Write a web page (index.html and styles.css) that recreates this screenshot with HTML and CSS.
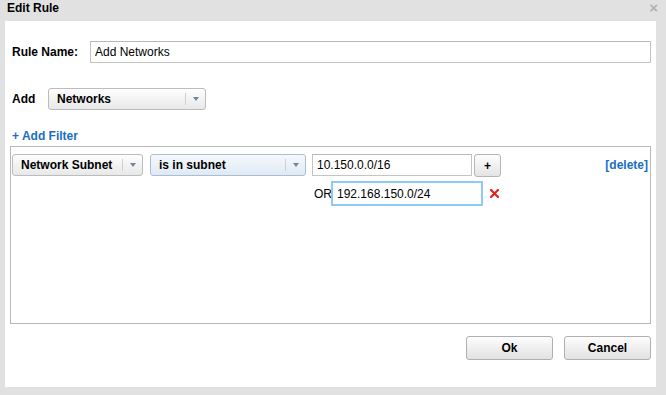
FILE: index.html
```html
<!DOCTYPE html>
<html lang="en">
<head>
    <meta charset="UTF-8">
    <meta name="viewport" content="width=device-width, initial-scale=1.0">
    <title>Edit Rule</title>
    <link rel="stylesheet" href="styles.css">
</head>
<body>
    <div class="dialog">
        <div class="titlebar">
            <span class="title">Edit Rule</span>
            <span class="close">&times;</span>
        </div>

        <div class="panel">
            <div class="row">
                <label class="label name-label" for="rule-name">Rule Name:</label>
                <input type="text" id="rule-name" class="text-input name-input" value="Add Networks">
            </div>

            <div class="row add-row">
                <span class="label add-label">Add</span>
                <div class="select select-add">
                    <span class="select-text">Networks</span>
                    <span class="select-sep"></span>
                    <span class="select-arrow"></span>
                </div>
            </div>

            <a class="add-filter" href="#">+ Add Filter</a>

            <div class="filter-box">
                <div class="filter-row">
                    <div class="select select-field">
                        <span class="select-text">Network Subnet</span>
                        <span class="select-sep"></span>
                        <span class="select-arrow"></span>
                    </div>
                    <div class="select select-op active">
                        <span class="select-text">is in subnet</span>
                        <span class="select-sep"></span>
                        <span class="select-arrow"></span>
                    </div>
                    <div class="values">
                        <div class="value-line">
                            <input type="text" class="text-input value-input" value="10.150.0.0/16">
                            <button type="button" class="plus">+</button>
                        </div>
                        <div class="value-line or-line">
                            <span class="or">OR</span>
                            <input type="text" class="text-input value-input focused" value="192.168.150.0/24">
                            <span class="remove">
                                <svg width="9" height="9" viewBox="0 0 9 9">
                                    <path d="M1 1 L8 8 M8 1 L1 8" stroke="#e0251e" stroke-width="2.2" stroke-linecap="square"/>
                                </svg>
                            </span>
                        </div>
                    </div>
                    <a class="delete" href="#">[delete]</a>
                </div>
            </div>

            <div class="actions">
                <button type="button" class="btn btn-ok">Ok</button>
                <button type="button" class="btn btn-cancel">Cancel</button>
            </div>
        </div>
    </div>
</body>
</html>
```

FILE: styles.css
```css
body {
    margin: 0;
    background-color: #e1e1e1;
    font-family: "Liberation Sans", Arial, sans-serif;
    font-size: 12px;
    color: #000;
}
.dialog {
    width: 666px;
    height: 395px;
}
.titlebar {
    height: 21px;
    display: flex;
    justify-content: space-between;
    padding: 0 8px 0 7px;
}
.title {
    font-weight: bold;
    line-height: 16px;
}
.close {
    color: #b2b2b2;
    font-size: 15px;
    line-height: 16px;
    font-weight: bold;
}
.panel {
    background-color: #fff;
    margin: 0 10px 0 5px;
    height: 366px;
    box-sizing: border-box;
    padding: 20px 5px 0 5px;
}
.row {
    display: flex;
    align-items: center;
    height: 22px;
}
.label {
    font-weight: bold;
    padding-left: 2px;
}
.name-label {
    width: 78px;
}
.add-row {
    margin-top: 25px;
}
.add-label {
    width: 36px;
}
.text-input {
    box-sizing: border-box;
    height: 22px;
    border: 1px solid #c4c4c4;
    border-top-color: #b8b8b8;
    padding: 0 4px;
    font-family: "Liberation Sans", Arial, sans-serif;
    font-size: 12px;
    color: #000;
    outline: none;
    margin: 0;
}
.name-input {
    flex-grow: 1;
}
.select {
    box-sizing: border-box;
    height: 22px;
    display: flex;
    align-items: center;
    border: 1px solid #bcbcbc;
    border-radius: 3px;
    background: linear-gradient(#fefefe, #e8e8e8);
    font-weight: bold;
    padding-left: 8px;
}
.select.active {
    border-color: #a9bdd3;
    background: linear-gradient(#f6f9fc, #dfe9f4);
}
.select-text {
    flex-grow: 1;
}
.select-sep {
    width: 1px;
    height: 12px;
    background-color: #d0d0d0;
}
.select-arrow {
    width: 19px;
    display: flex;
    justify-content: center;
}
.select-arrow::after {
    content: "";
    border-left: 3px solid transparent;
    border-right: 3px solid transparent;
    border-top: 4px solid #73859b;
}
.select-add {
    width: 158px;
}
.add-filter {
    display: block;
    margin-top: 19px;
    line-height: 14px;
    padding-left: 2px;
    color: #1a6ec2;
    font-weight: bold;
    text-decoration: none;
}
.filter-box {
    box-sizing: border-box;
    height: 178px;
    margin-top: 3px;
    border: 1px solid #b7b7b7;
    padding: 7px 2px 0 1px;
}
.filter-row {
    display: flex;
    align-items: flex-start;
}
.select-field {
    width: 131px;
    margin-right: 7px;
}
.select-op {
    width: 156px;
    margin-right: 6px;
}
.values {
    margin-top: -1px;
}
.value-line {
    display: flex;
    align-items: center;
}
.value-input {
    width: 160px;
}
.plus {
    box-sizing: border-box;
    width: 27px;
    height: 23px;
    margin: 1px 0 0 2px;
    border: 1px solid #b5b5b5;
    border-radius: 3px;
    background: linear-gradient(#fdfdfd, #e4e4e4);
    font-family: "Liberation Sans", Arial, sans-serif;
    font-weight: bold;
    font-size: 12px;
    padding: 0;
}
.or-line {
    margin-top: 4px;
}
.or {
    width: 17px;
    margin-left: 2px;
    padding-top: 1px;
}
.value-input.focused {
    width: 152px;
    height: 25px;
    border: 2px solid #8ecbf2;
    padding: 0 4px;
}
.remove {
    display: flex;
    margin-left: 7px;
}
.delete {
    margin-left: auto;
    line-height: 22px;
    color: #1a6ec2;
    font-weight: bold;
    text-decoration: none;
}
.actions {
    display: flex;
    justify-content: flex-end;
    margin-top: 12px;
}
.btn {
    box-sizing: border-box;
    width: 87px;
    height: 24px;
    margin-left: 11px;
    border: 1px solid #b0b0b0;
    border-radius: 3px;
    background: linear-gradient(#fdfdfd, #e2e2e2);
    font-family: "Liberation Sans", Arial, sans-serif;
    font-weight: bold;
    font-size: 12px;
    color: #000;
    padding: 0;
}
```
